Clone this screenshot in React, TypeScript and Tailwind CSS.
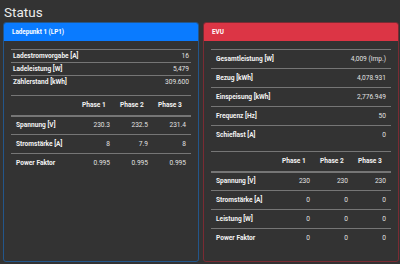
import React from 'react';

type Pair = [string, string];
type PhaseRow = [string, string, string, string];

const lp1Values: Pair[] = [
    ['Ladestromvorgabe [A]', '16'],
    ['Ladeleistung [W]', '5,479'],
    ['Zählerstand [kWh]', '309.600'],
];

const lp1Phases: PhaseRow[] = [
    ['Spannung [V]', '230.3', '232.5', '231.4'],
    ['Stromstärke [A]', '8', '7.9', '8'],
    ['Power Faktor', '0.995', '0.995', '0.995'],
];

const evuValues: Pair[] = [
    ['Gesamtleistung [W]', '4,009 (Imp.)'],
    ['Bezug [kWh]', '4,078.931'],
    ['Einspeisung [kWh]', '2,776.949'],
    ['Frequenz [Hz]', '50'],
    ['Schieflast [A]', '0'],
];

const evuPhases: PhaseRow[] = [
    ['Spannung [V]', '230', '230', '230'],
    ['Stromstärke [A]', '0', '0', '0'],
    ['Leistung [W]', '0', '0', '0'],
    ['Power Faktor', '0', '0', '0'],
];

function ValueTable({rows, small}: {rows: Pair[]; small?: boolean}) {
    return (
        <div className="mb-[7px]">
            {rows.map(([label, value]) => (
                <div
                    key={label}
                    className={`flex items-center justify-between border-t border-[#767676] ${small ? 'h-[13px] px-[2px]' : 'h-[19px] px-[5px]'}`}
                >
                    <span className="font-bold text-[#f2f2f2]">{label}</span>
                    <span className="text-[#e2e2e2]">{value}</span>
                </div>
            ))}
        </div>
    );
}

function PhaseTable({rows}: {rows: PhaseRow[]}) {
    return (
        <div>
            <div className="grid h-[20px] grid-cols-[1fr_38px_38px_38px] items-center border-t border-[#767676]">
                <span />
                <span className="pl-[5px] font-bold text-[#f2f2f2]">Phase 1</span>
                <span className="pl-[5px] font-bold text-[#f2f2f2]">Phase 2</span>
                <span className="pl-[5px] font-bold text-[#f2f2f2]">Phase 3</span>
            </div>
            {rows.map(([label, p1, p2, p3], i) => (
                <div
                    key={label}
                    className={`grid h-[19px] grid-cols-[1fr_38px_38px_38px] items-center border-[#767676] ${i === 0 ? 'border-t-2' : 'border-t'}`}
                >
                    <span className="pl-[5px] font-bold text-[#f2f2f2]">{label}</span>
                    <span className="pr-[5px] text-right text-[#e2e2e2]">{p1}</span>
                    <span className="pr-[5px] text-right text-[#e2e2e2]">{p2}</span>
                    <span className="pr-[5px] text-right text-[#e2e2e2]">{p3}</span>
                </div>
            ))}
        </div>
    );
}

function Card({title, blue, children}: {title: string; blue?: boolean; children: React.ReactNode}) {
    return (
        <div className={`flex flex-col overflow-hidden rounded-[3px] border ${blue ? 'border-[#23568b]' : 'border-[#7a2b33]'}`}>
            <div className={`flex h-[18px] items-center pl-[8px] text-[6.3px] font-bold text-white ${blue ? 'bg-[#0a7bff]' : 'bg-[#dc3545]'}`}>
                {title}
            </div>
            <div className="flex-1 px-[7px] pt-[8px]">{children}</div>
        </div>
    );
}

export default function App() {
    return (
        <div className="flex h-[264px] w-[400px] flex-col bg-[#333333] font-['Roboto',Arial,sans-serif] text-[6.6px] leading-none">
            <div className="h-[22px] pl-[4px] pt-[6px] text-[13.5px] leading-[13px] text-[#ececec]">Status</div>
            <div className="grid flex-1 grid-cols-2 gap-[4px] pb-[2px] pl-[3px] pr-[1px]">
                <Card title="Ladepunkt 1 (LP1)" blue>
                    <ValueTable rows={lp1Values} small />
                    <PhaseTable rows={lp1Phases} />
                </Card>
                <Card title="EVU">
                    <ValueTable rows={evuValues} />
                    <PhaseTable rows={evuPhases} />
                </Card>
            </div>
        </div>
    );
}
